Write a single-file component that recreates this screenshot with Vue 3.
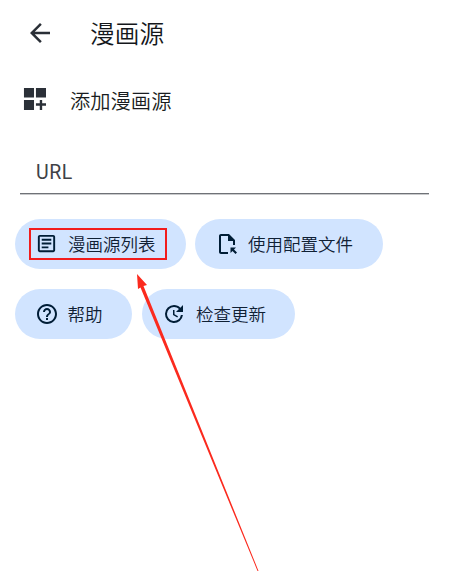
<script setup>
const rows = [
  [
    { label: '漫画源列表', icon: 'list', cls: 'w171', marked: true },
    { label: '使用配置文件', icon: 'file', cls: 'w188' },
  ],
  [
    { label: '帮助', icon: 'help', cls: 'w117' },
    { label: '检查更新', icon: 'update', cls: 'w153' },
  ],
]
</script>

<template>
  <div class="page">
    <header class="top">
      <svg class="back" viewBox="0 0 24 24" width="30" height="30" aria-hidden="true">
        <path d="M20 11H7.830l5.590-5.590L12 4l-8 8 8 8 1.410-1.410L7.830 13H20z" />
      </svg>
      <h1 class="title">漫画源</h1>
    </header>

    <div class="section">
      <svg class="add" viewBox="0 0 24 24" width="23" height="23" aria-hidden="true">
        <path d="M1 1h10.500v10H1zM13.500 1H24v10H13.500zM1 13.500h10.500V24H1zM17.500 13.500h2.500v3.500h4v2.500h-4V24h-2.500v-4.500H13.500V17h4z" />
      </svg>
      <span>添加漫画源</span>
    </div>

    <div class="field"><span>URL</span></div>

    <div class="actions">
      <div v-for="(row, r) in rows" :key="r" class="row">
        <button v-for="item in row" :key="item.label" class="pill" :class="item.cls">
          <svg v-if="item.icon === 'list'" viewBox="0 0 24 24" width="23" height="23" aria-hidden="true">
            <path d="M19 5v14H5V5h14m0-2H5c-1.100 0-2 .9-2 2v14c0 1.100.9 2 2 2h14c1.100 0 2-.9 2-2V5c0-1.100-.9-2-2-2z" />
            <path d="M14 17H7v-2h7v2zm3-4H7v-2h10v2zm0-4H7V7h10v2z" />
          </svg>
          <svg v-else-if="item.icon === 'file'" viewBox="0 0 24 24" width="24" height="24" aria-hidden="true">
            <path d="M6 2h8l6 6v5h-2V9h-5V4H6v16h7v2H6c-1.100 0-2-.9-2-2V4c0-1.100.9-2 2-2z" />
            <path d="M15.500 15.500h5.500l-2 2 3 3-1.500 1.500-3-3-2 2z" />
          </svg>
          <svg v-else-if="item.icon === 'help'" viewBox="0 0 24 24" width="24" height="24" aria-hidden="true">
            <path d="M11 18h2v-2h-2v2zm1-16C6.480 2 2 6.480 2 12s4.480 10 10 10 10-4.480 10-10S17.520 2 12 2zm0 18c-4.410 0-8-3.590-8-8s3.590-8 8-8 8 3.590 8 8-3.590 8-8 8zm0-14c-2.210 0-4 1.790-4 4h2c0-1.100.9-2 2-2s2 .9 2 2c0 2-3 1.750-3 5h2c0-2.250 3-2.500 3-5 0-2.210-1.790-4-4-4z" />
          </svg>
          <svg v-else viewBox="0 0 24 24" width="24" height="24" aria-hidden="true">
            <path d="M11 8v5l4.250 2.520.770-1.280-3.520-2.090V8H11zm10 2V3l-2.640 2.640C16.740 4.010 14.490 3 12 3a9 9 0 1 0 8.940 10h-2.020A7 7 0 1 1 12 5c1.930 0 3.680.790 4.950 2.050L14 10h7z" />
          </svg>
          <span class="label">{{ item.label }}</span>
          <i v-if="item.marked" class="mark"></i>
        </button>
      </div>
    </div>

    <svg class="arrow" viewBox="0 0 449 580" width="449" height="580" aria-hidden="true">
      <polygon points="137,274 147,285 143.500,286 258.500,571 257.500,571 140.500,287.500 138,289" />
    </svg>
  </div>
</template>

<style scoped>
.page {
  position: relative;
  width: 449px;
  height: 580px;
  overflow: hidden;
  background: #fff;
  color: #14171b;
  font-family: "Noto Sans CJK SC", "Noto Sans", sans-serif;
  font-weight: 350;
}
.top {
  display: flex;
  align-items: center;
  height: 34px;
  padding: 16px 0 0 25px;
}
.back { fill: #2a2f36; flex: none; }
.title {
  margin: -2px 0 0 35px;
  font-size: 24.700px;
  font-weight: 350;
  line-height: 34px;
}
.section {
  display: flex;
  align-items: center;
  gap: 24px;
  height: 34px;
  margin-top: 33px;
  padding-left: 23px;
  font-size: 20.300px;
  color: #191c20;
}
.add { fill: #2b3038; flex: none; margin-top: -3px; }
.field {
  display: flex;
  align-items: center;
  box-sizing: border-box;
  height: 56.500px;
  margin: 20.500px 20px 0;
  padding: 15px 0 0 16px;
  border-bottom: 1.500px solid #6f7277;
  box-shadow: 0 1px 0 #c9cacc;
  font-family: Roboto, sans-serif;
  font-weight: 400;
  font-size: 19.500px;
  letter-spacing: 0.500px;
  color: #3f4247;
}
.actions {
  display: flex;
  flex-direction: column;
  gap: 20px;
  margin-top: 25px;
  padding-left: 15px;
}
.row { display: flex; gap: 10px; }
.row:first-child { gap: 9px; }
.pill {
  position: relative;
  display: flex;
  align-items: center;
  gap: 9px;
  box-sizing: border-box;
  height: 50px;
  padding: 0 0 0 20px;
  border: 0;
  border-radius: 25px;
  background: #d1e4ff;
  color: #0f2034;
  font: inherit;
  font-size: 17.500px;
}
.pill svg { fill: #001d36; flex: none; margin-top: -1px; }
.label { margin-top: -1px; }
.w171 { width: 171px; gap: 10px; }
.w188 { width: 188px; }
.w117 { width: 117px; gap: 8.500px; }
.w153 { width: 153px; gap: 10px; }
.mark {
  position: absolute;
  left: 14px;
  top: 9px;
  width: 138px;
  height: 32px;
  box-sizing: border-box;
  border: 2px solid #f21c1c;
}
.arrow {
  position: absolute;
  left: 0;
  top: 0;
  fill: #fb2a1e;
  pointer-events: none;
}
</style>
